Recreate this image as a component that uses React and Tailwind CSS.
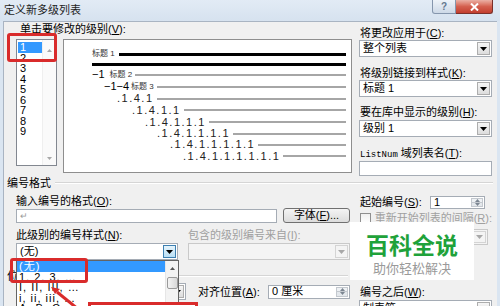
import React from "react";

const U = ({ children }) => <span className="underline">{children}</span>;

function Label({ children, className = "" }) {
  return (
    <div className={"h-[14px] text-[11px] leading-[14px] whitespace-nowrap " + className}>
      {children}
    </div>
  );
}

function Tri({ up = false, color = "#000", w = 7, h = 4 }) {
  return (
    <svg width={w} height={h} viewBox={`0 0 ${w} ${h}`}>
      {up ? (
        <path d={`M0 ${h}H${w}L${w / 2} 0z`} fill={color} />
      ) : (
        <path d={`M0 0H${w}L${w / 2} ${h}z`} fill={color} />
      )}
    </svg>
  );
}

function Combo({ text, className = "", disabled = false, active = false }) {
  return (
    <div
      className={
        "flex items-stretch border " +
        (disabled ? "border-[#c9c9c9] bg-[#f4f4f4] " : "border-[#a5acb5] bg-white ") +
        className
      }
    >
      <div className="flex-1 flex items-center pl-[3px] text-[11px] leading-none whitespace-nowrap overflow-hidden">
        {text}
      </div>
      <div
        className={
          "w-[13px] my-[1px] mr-[1px] flex items-center justify-center border " +
          (active
            ? "border-[#3c7fb1] bg-linear-to-b from-[#e5f4fc] to-[#b9dff5]"
            : disabled
            ? "border-[#d4d4d4] bg-[#f4f4f4]"
            : "border-[#adadad] bg-linear-to-b from-[#f6f6f6] to-[#dcdcdc]")
        }
      >
        <Tri color={disabled ? "#a8a8a8" : "#000"} />
      </div>
    </div>
  );
}

function Spin({ text, className = "" }) {
  return (
    <div className={"flex border border-[#a5acb5] bg-white " + className}>
      <div className="flex-1 flex items-center pl-[3px] text-[11px] leading-none whitespace-nowrap">{text}</div>
      <div className="w-[12px] my-[1px] mr-[1px] flex flex-col border border-[#c3c8ce]">
        <div className="flex-1 flex items-center justify-center bg-[#eef1f4] border-b border-[#c3c8ce]">
          <Tri up color="#7b8591" w={5} h={3} />
        </div>
        <div className="flex-1 flex items-center justify-center bg-[#e4e8ec]">
          <Tri color="#7b8591" w={5} h={3} />
        </div>
      </div>
    </div>
  );
}

function PRow({ h, pl, children, thick = false, gap = "ml-[3px]" }) {
  return (
    <div className={"flex items-center pr-[5px] " + h + " " + pl}>
      {children}
      <div className={"flex-1 " + gap + " " + (thick ? "h-[3px] bg-black" : "h-[2px] bg-[#a6a6a6]")} />
    </div>
  );
}

const Small = ({ children, className = "" }) => (
  <span className={"text-[8px] leading-none text-[#333] whitespace-nowrap " + className}>{children}</span>
);
const Num = ({ children }) => (
  <span className="text-[11px] tracking-[1.5px] leading-none whitespace-nowrap text-[#222]">{children}</span>
);

function SectionHeader({ children }) {
  return (
    <div className="flex items-center h-[14px] pl-[3px]">
      <span className="text-[11px] leading-[14px] whitespace-nowrap">{children}</span>
      <div className="flex-1 ml-[4px] mr-[4px] border-t border-[#d5d5d5] border-b border-b-white" />
    </div>
  );
}

export default function App() {
  const levels = ["1", "2", "3", "4", "5", "6", "7", "8", "9"];
  const styles = ["(无)", "1, 2, 3, …", "I, II, III, …", "i, ii, iii, …", "A, B, C, …"];
  return (
    <div className="relative w-[500px] h-[306px] overflow-hidden bg-[#dae5f1] text-black font-['Liberation_Sans','Noto_Sans_CJK_SC',sans-serif]">
      {/* title bar */}
      <div className="h-[21px] flex items-start bg-linear-to-b from-[#e2ebf5] to-[#d6e2ef]">
        <div className="pl-[4px] pt-[3px] text-[11px] leading-[14px] text-[#1e1e1e]">定义新多级列表</div>
        <div className="ml-auto mr-[7px] flex">
          <div className="w-[24px] h-[14px] rounded-bl-[3px] border border-t-0 border-[#8596ad] bg-linear-to-b from-[#eef3f9] to-[#cdd9e7] flex items-center justify-center text-[10px] font-bold leading-none text-[#64788f]">
            ?
          </div>
          <div className="w-[37px] h-[14px] rounded-br-[3px] border border-t-0 border-l-0 border-[#7a302a] bg-linear-to-b from-[#eab0a5] via-[#d4604f] to-[#c23d2e] flex items-center justify-center">
            <svg width="9" height="8" viewBox="0 0 9 8">
              <path d="M1 0.5L8 7.5M8 0.5L1 7.5" stroke="#fff" strokeWidth="2" />
            </svg>
          </div>
        </div>
      </div>

      {/* body */}
      <div className="ml-[3px] w-[494px] h-[285px] bg-[#f0f0f0] border-l border-t border-[#a9b4c2]">
        {/* top section */}
        <div className="flex">
          <div className="ml-[12px] w-[336px]">
            <div className="h-[17px] pl-[4px] text-[11px] leading-[14px] whitespace-nowrap">
              单击要修改的级别(<U>V</U>):
            </div>
            <div className="flex">
              <div className="w-[41px] h-[127px] border border-[#828790] bg-white flex">
                <div className="flex-1 pt-[2px] pl-[1px]">
                  {levels.map((l, i) => (
                    <div
                      key={l}
                      className={
                        "h-[10.5px] text-[11px] leading-[10.5px] pl-[2px] " +
                        (i === 0 ? "bg-[#3399ff] text-white" : "text-black")
                      }
                    >
                      {l}
                    </div>
                  ))}
                </div>
                <div className="w-[14px] flex flex-col justify-between items-center pt-[9px] pb-[5px] bg-[#fafafa] border-l border-[#efefef]">
                  <Tri up color="#a8a8a8" w={5} h={3} />
                  <Tri color="#a8a8a8" w={5} h={3} />
                </div>
              </div>
              <div className="ml-[6px] w-[289px] h-[134px] border border-[#8e8e8e] bg-white pt-[9px]">
                <PRow h="h-[10px]" pl="pl-[28px]" thick gap="ml-[4px]">
                  <Small>标题 1</Small>
                </PRow>
                <PRow h="h-[10px]" pl="pl-[28px]" thick gap="ml-0" />
                <PRow h="h-[11px]" pl="pl-[28px]">
                  <span className="text-[11px] leading-none">−1</span>
                  <Small className="ml-[5px]">标题 2</Small>
                </PRow>
                <PRow h="h-[13px]" pl="pl-[40px]">
                  <span className="text-[11px] leading-none">−1−4</span>
                  <Small className="ml-[2px]">标题 3</Small>
                </PRow>
                <PRow h="h-[11px]" pl="pl-[53px]">
                  <Num>.1.4.1</Num>
                </PRow>
                <PRow h="h-[12px]" pl="pl-[68px]">
                  <Num>.1.4.1.1</Num>
                </PRow>
                <PRow h="h-[12px]" pl="pl-[81px]">
                  <Num>.1.4.1.1.1</Num>
                </PRow>
                <PRow h="h-[11px]" pl="pl-[93px]">
                  <Num>.1.4.1.1.1.1</Num>
                </PRow>
                <PRow h="h-[11px]" pl="pl-[106px]">
                  <Num>.1.4.1.1.1.1.1</Num>
                </PRow>
                <PRow h="h-[12px]" pl="pl-[119px]">
                  <Num>.1.4.1.1.1.1.1.1</Num>
                </PRow>
              </div>
            </div>
          </div>

          <div className="ml-[7px] w-[133px]">
            <Label className="mt-[4px] pl-[1px]">
              将更改应用于(<U>C</U>):
            </Label>
            <Combo text="整个列表" className="h-[17px]" />
            <Label className="mt-[9px] pl-[1px]">
              将级别链接到样式(<U>K</U>):
            </Label>
            <Combo text="标题 1" className="h-[17px]" />
            <Label className="mt-[8px] pl-[1px]">
              要在库中显示的级别(<U>H</U>):
            </Label>
            <Combo text="级别 1" className="h-[17px] mt-[1px]" />
            <Label className="mt-[9px] pl-[1px]">
              <span className="font-['Liberation_Mono',monospace] text-[9px]">ListNum</span> 域列表名(<U>T</U>):
            </Label>
            <div className="mt-[1px] h-[15px] border border-[#a5acb5] bg-white" />
          </div>
        </div>

        <SectionHeader>编号格式</SectionHeader>

        {/* lower section */}
        <div className="flex">
          <div className="w-[348px]">
            <Label className="mt-[4px] pl-[12px]">
              输入编号的格式(<U>O</U>):
            </Label>
            <div className="flex items-end h-[15px] pl-[12px]">
              <div className="w-[261px] h-[14px] border border-[#a5acb5] bg-white flex items-center pl-[3px] text-[9px] leading-none text-[#9a9a9a]">
                ↵
              </div>
              <div className="ml-[6px] w-[67px] h-[15px] rounded-[3px] border border-[#707070] bg-linear-to-b from-[#f4f4f4] to-[#dcdcdc] flex items-center justify-center text-[11px] leading-none whitespace-nowrap">
                字体(<U>F</U>)...
              </div>
            </div>
            <div className="mt-[5px] flex h-[14px]">
              <Label className="w-[184px] pl-[12px]">
                此级别的编号样式(<U>N</U>):
              </Label>
              <Label className="text-[#a0a0a0]">
                包含的级别编号来自(<U>I</U>):
              </Label>
            </div>
            <div className="mt-[1px] flex pl-[12px]">
              <Combo text="(无)" className="w-[162px] h-[17px]" active />
              <Combo text="" className="ml-[10px] w-[162px] h-[17px]" disabled />
            </div>
            <div className="mt-[9px]">
              <SectionHeader>位置</SectionHeader>
            </div>
            <div className="flex items-center h-[17px]">
              <Label className="w-[101px] pl-[12px]">
                编号对齐方式(<U>U</U>):
              </Label>
              <Combo text="左对齐" className="w-[81px] h-[17px]" />
              <Label className="ml-[12px] w-[70px]">
                对齐位置(<U>A</U>):
              </Label>
              <Spin text="0 厘米" className="w-[82px] h-[14px]" />
            </div>
          </div>

          <div className="ml-[7px] w-[133px]">
            <div className="mt-[5px] h-[14px] flex items-center">
              <Label className="pl-[1px]">
                起始编号(<U>S</U>):
              </Label>
              <Spin text="1" className="ml-auto mr-[7px] w-[55px] h-[13px]" />
            </div>
            <div className="mt-[2px] h-[14px] flex items-center">
              <div className="ml-[1px] w-[11px] h-[11px] border border-[#8f8f8f] bg-linear-to-b from-[#f0f0f0] to-white" />
              <Label className="ml-[4px] text-[#a0a0a0]">
                重新开始列表的间隔(<U>R</U>):
              </Label>
            </div>
            <Combo text="" className="mt-[4px] ml-[16px] w-[113px] h-[16px]" disabled />
            <Label className="mt-[40px] pl-[1px]">
              编号之后(<U>W</U>):
            </Label>
            <Combo text="制表符" className="mt-[1px] h-[17px]" />
          </div>
        </div>
      </div>

      {/* open dropdown list */}
      <div className="absolute left-[16px] top-[260px] w-[163px] h-[60px] border border-[#646464] bg-white flex">
        <div className="flex-1 pt-0">
          {styles.map((s, i) => (
            <div
              key={s}
              className={
                "h-[10.5px] text-[11px] leading-[10.5px] pl-[2px] whitespace-nowrap tracking-[1px] " +
                (i === 0 ? "bg-[#3399ff] text-white" : "text-black")
              }
            >
              {s}
            </div>
          ))}
        </div>
        <div className="w-[13px] flex flex-col items-center bg-[#f3f3f3] border-l border-[#e6e6e6]">
          <div className="h-[14px] flex items-center justify-center">
            <Tri up color="#555" w={5} h={3} />
          </div>
          <div className="mt-[2px] w-[11px] h-[12px] rounded-[2px] border border-[#9a9a9a] bg-linear-to-r from-[#f4f4f4] to-[#d8d8d8]" />
        </div>
      </div>

      {/* watermark */}
      <div className="absolute left-[350px] top-[222px] w-[124px] h-[58px] bg-white flex flex-col items-center">
        <div className="mt-[10px] h-[24px] text-[23px] leading-[24px] font-bold text-[#1fa23a] whitespace-nowrap font-['Noto_Sans_CJK_SC',sans-serif]">
          百科全说
        </div>
        <div className="mt-[5px] h-[14px] text-[13px] leading-[14px] text-[#9a9a9a] whitespace-nowrap font-['Noto_Sans_CJK_SC',sans-serif]">
          助你轻松解决
        </div>
      </div>

      {/* annotations */}
      <div className="absolute left-[7px] top-[33px] w-[50px] h-[29px] border-[3px] border-[#d92b2b] rounded-[3px]" />
      <div className="absolute left-[10px] top-[258px] w-[78px] h-[25px] border-[3px] border-[#d92b2b] rounded-[3px]" />
      <div className="absolute left-[88px] top-[302px] w-[110px] h-[20px] border-[3px] border-[#d92b2b] bg-white" />
      <svg className="absolute left-0 top-0" width="500" height="306" viewBox="0 0 500 306">
        <path d="M78 309L57 292" stroke="#d92b2b" strokeWidth="3" fill="none" />
        <path d="M51 287L60 289L55 294z" fill="#d92b2b" />
      </svg>
    </div>
  );
}
